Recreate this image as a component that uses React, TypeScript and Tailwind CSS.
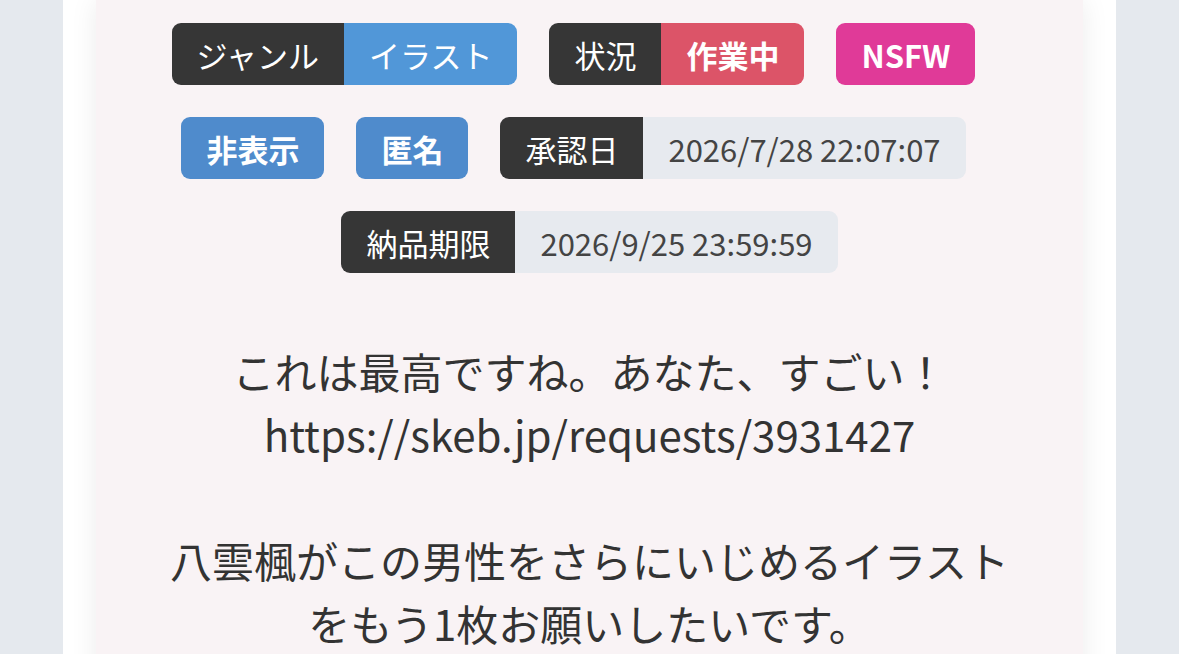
const fontStack = '"Noto Sans CJK JP", "Noto Sans", sans-serif';

const badgeClassName = 'flex h-[62px] items-center px-[25px] text-[31px] leading-none';

interface PairBadgeProps {
  label: string;
  value: string;
  valueClassName: string;
  last?: boolean;
}

function PairBadge({ label, value, valueClassName, last = false }: PairBadgeProps) {
  return (
    <div className={`mb-8 flex overflow-hidden rounded-[9px] ${last ? '' : 'mr-8'}`}>
      <span className={`${badgeClassName} bg-[#363636] text-white`}>{label}</span>
      <span className={`${badgeClassName} ${valueClassName}`}>{value}</span>
    </div>
  );
}

function FlagBadge({ label, className }: { label: string; className: string }) {
  return (
    <div className={`mb-8 mr-8 rounded-[9px] font-bold text-white ${badgeClassName} ${className}`}>
      {label}
    </div>
  );
}

export default function App() {
  return (
    <div className="min-h-screen bg-[#e5e9ee]" style={{ fontFamily: fontStack }}>
      <div className="mx-auto min-h-screen w-[1053px] bg-white px-[33px]">
        <div className="min-h-screen bg-[#f9f3f5] px-[64px] pb-16 pt-[23px] shadow-[0_0_26px_rgba(0,0,0,0.08)]">
          <div className="flex flex-wrap justify-center">
            <PairBadge label="ジャンル" value="イラスト" valueClassName="bg-[#5197d8] text-white" />
            <PairBadge
              label="状況"
              value="作業中"
              valueClassName="bg-[#dc5468] font-bold text-white"
            />
            <FlagBadge label="NSFW" className="bg-[#e03a98] px-[24px]" />
            <FlagBadge label="非表示" className="bg-[#4f8bcc]" />
            <FlagBadge label="匿名" className="bg-[#4f8bcc] px-[24px]" />
            <PairBadge
              label="承認日"
              value="2026/7/28 22:07:07"
              valueClassName="bg-[#e7eaef] text-[#444444]"
            />
            <PairBadge
              label="納品期限"
              value="2026/9/25 23:59:59"
              valueClassName="bg-[#e7eaef] text-[#444444]"
              last
            />
          </div>

          <div className="mt-[34px] text-center text-[42px] leading-[63px] text-[#333333]">
            <p>これは最高ですね。あなた、すごい！</p>
            <p>https://skeb.jp/requests/3931427</p>
            <p>&nbsp;</p>
            <p>八雲楓がこの男性をさらにいじめるイラストをもう1枚お願いしたいです。</p>
          </div>
        </div>
      </div>
    </div>
  );
}
